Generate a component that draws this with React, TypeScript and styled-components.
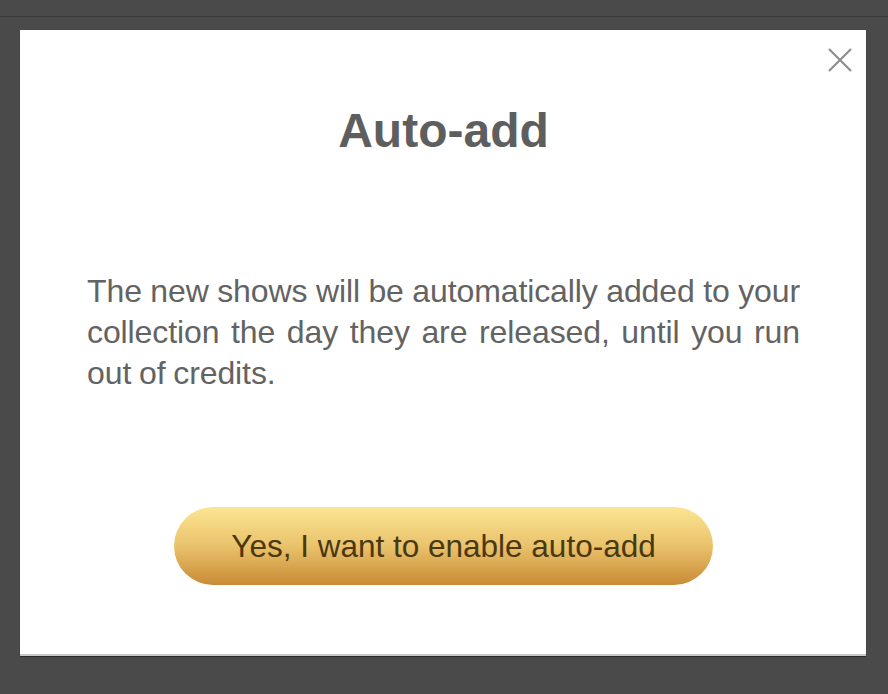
import React from 'react'
import styled, { createGlobalStyle } from 'styled-components'

const GlobalStyle = createGlobalStyle`
  html, body {
    margin: 0;
    padding: 0;
    background: #4a4a4a;
    font-family: 'Liberation Sans', Arial, sans-serif;
  }
`

const Page = styled.div`
  width: 888px;
  height: 694px;
  background: #4a4a4a;
  overflow: hidden;
`

const TopStrip = styled.div`
  height: 16px;
  border-bottom: 1px solid #3a3a3a;
`

const Overlay = styled.div`
  padding: 13px 22px 0 20px;
`

const Modal = styled.div`
  position: relative;
  box-sizing: border-box;
  width: 846px;
  height: 626px;
  background: #fff;
  border-bottom: 2px solid #c8c8c8;
  box-shadow: 0 1px 1px rgba(0, 0, 0, 0.4);
  display: flex;
  flex-direction: column;
  align-items: center;
  padding: 73px 66px 0 67px;
`

const CloseButton = styled.button`
  position: absolute;
  top: 18px;
  right: 14px;
  width: 24px;
  height: 24px;
  padding: 0;
  border: none;
  background: none;
  cursor: pointer;

  & > svg {
    display: block;
  }
`

const Title = styled.h1`
  margin: 0;
  font-size: 48px;
  line-height: 56px;
  font-weight: bold;
  color: #5e5e5e;
`

const Body = styled.p`
  margin: 112px 0 0;
  width: 100%;
  font-size: 32px;
  line-height: 41px;
  letter-spacing: -0.1px;
  word-spacing: -1px;
  color: #636363;
  text-align: justify;
`

const ConfirmButton = styled.button`
  margin-top: 113px;
  flex-shrink: 0;
  width: 539px;
  height: 78px;
  border: none;
  border-radius: 39px;
  background: linear-gradient(to bottom, #fce591 0%, #eac26c 50%, #c98a35 100%);
  color: #4a3810;
  font-family: 'Liberation Sans', Arial, sans-serif;
  font-size: 31.5px;
  cursor: pointer;
`

export default function App() {
  return (
    <Page>
      <GlobalStyle />
      <TopStrip />
      <Overlay>
        <Modal>
          <CloseButton aria-label="Close">
            <svg width="24" height="24" viewBox="0 0 24 24">
              <path d="M1 1 L23 23 M23 1 L1 23" stroke="#8a8a8a" strokeWidth="2" fill="none" />
            </svg>
          </CloseButton>
          <Title>Auto-add</Title>
          <Body>
            The new shows will be automatically added to your collection the day they are released, until you run out of credits.
          </Body>
          <ConfirmButton>Yes, I want to enable auto-add</ConfirmButton>
        </Modal>
      </Overlay>
    </Page>
  )
}
